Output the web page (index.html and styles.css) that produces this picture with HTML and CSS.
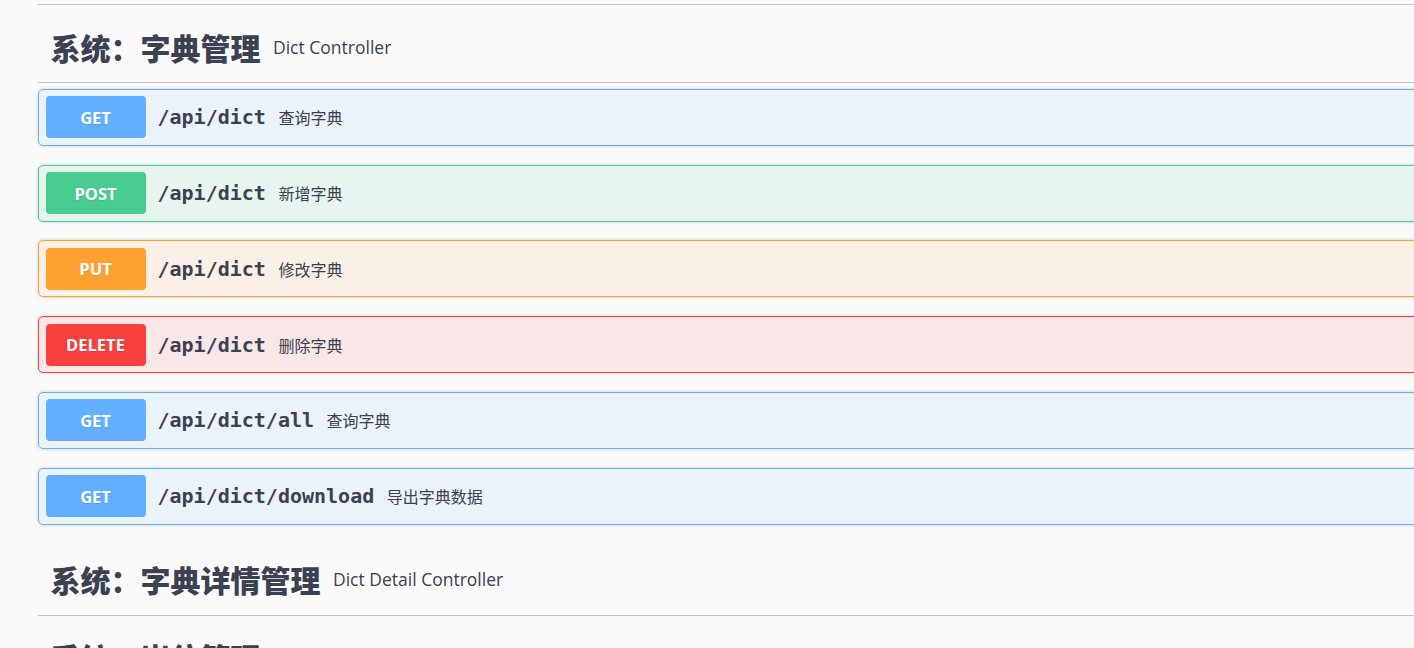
FILE: index.html
```html
<!DOCTYPE html>
<html lang="zh-CN">
<head>
<meta charset="utf-8">
<title>Swagger UI</title>
<link rel="stylesheet" href="styles.css">
</head>
<body>
<div class="wrapper">
  <div class="tag-end"></div>

  <section class="tag-section">
    <h3 class="tag"><span class="tag-name">系统：字典管理</span><small class="tag-desc">Dict Controller</small></h3>
    <div class="ops">
      <div class="opblock get"><div class="summary"><span class="method">GET</span><span class="path">/api/dict</span><span class="desc">查询字典</span></div></div>
      <div class="opblock post"><div class="summary"><span class="method">POST</span><span class="path">/api/dict</span><span class="desc">新增字典</span></div></div>
      <div class="opblock put"><div class="summary"><span class="method">PUT</span><span class="path">/api/dict</span><span class="desc">修改字典</span></div></div>
      <div class="opblock delete"><div class="summary"><span class="method">DELETE</span><span class="path">/api/dict</span><span class="desc">删除字典</span></div></div>
      <div class="opblock get"><div class="summary"><span class="method">GET</span><span class="path">/api/dict/all</span><span class="desc">查询字典</span></div></div>
      <div class="opblock get"><div class="summary"><span class="method">GET</span><span class="path">/api/dict/download</span><span class="desc">导出字典数据</span></div></div>
    </div>
  </section>

  <section class="tag-section">
    <h3 class="tag"><span class="tag-name">系统：字典详情管理</span><small class="tag-desc">Dict Detail Controller</small></h3>
  </section>

  <section class="tag-section">
    <h3 class="tag"><span class="tag-name">系统：岗位管理</span><small class="tag-desc">Job Controller</small></h3>
  </section>
</div>
</body>
</html>
```

FILE: styles.css
```css
html, body {
  margin: 0;
  padding: 0;
  background: #fafafa;
  overflow: hidden;
}

.wrapper {
  margin-left: 38px;
  width: 1500px;
  color: #3b4151;
  font-family: "Open Sans", "Noto Sans CJK SC", sans-serif;
}

.tag-end {
  height: 4px;
  border-bottom: 1px solid rgba(59, 65, 81, 0.3);
  margin-bottom: 6.25px;
}

.tag {
  margin: 0 0 5.5px;
  padding: 12.5px 25px 12.5px 12.5px;
  height: 46px;
  display: flex;
  align-items: center;
  border-bottom: 1px solid rgba(59, 65, 81, 0.3);
}

.tag-name {
  font-family: "Noto Sans CJK SC", sans-serif;
  font-size: 30px;
  font-weight: 800;
  color: #3b4151;
}

.tag-desc {
  font-family: "Open Sans", sans-serif;
  font-size: 17.5px;
  font-weight: 400;
  padding: 0 12.5px;
  color: #3b4151;
}

.ops {
  display: flex;
  flex-direction: column;
}

.opblock {
  margin: 0 0 18.8px;
  border: 1px solid #000;
  border-radius: 5px;
  box-shadow: 0 0 3.75px rgba(0, 0, 0, 0.19);
}

.summary {
  display: flex;
  align-items: center;
  padding: 6.5px;
}

.method {
  min-width: 100px;
  height: 42px;
  display: flex;
  align-items: center;
  justify-content: center;
  border-radius: 4px;
  color: #fff;
  font-family: "Open Sans", sans-serif;
  font-size: 16.5px;
  font-weight: 700;
  text-shadow: 0 1px 0 rgba(0, 0, 0, 0.1);
}

.path {
  padding: 0 12.5px 0 12px;
  font-family: "DejaVu Sans Mono", monospace;
  font-size: 20px;
  font-weight: 700;
  color: #3b4151;
}

.desc {
  font-family: "Noto Sans CJK SC", sans-serif;
  font-size: 16px;
  color: #3b4151;
}

.get { background: rgba(97, 175, 254, 0.1); border-color: #61affe; }
.get .method { background: #61affe; }
.post { background: rgba(73, 204, 144, 0.1); border-color: #49cc90; }
.post .method { background: #49cc90; }
.put { background: rgba(252, 161, 48, 0.1); border-color: #fca130; }
.put .method { background: #fca130; }
.delete { background: rgba(249, 62, 62, 0.1); border-color: #f93e3e; }
.delete .method { background: #f93e3e; }
```
